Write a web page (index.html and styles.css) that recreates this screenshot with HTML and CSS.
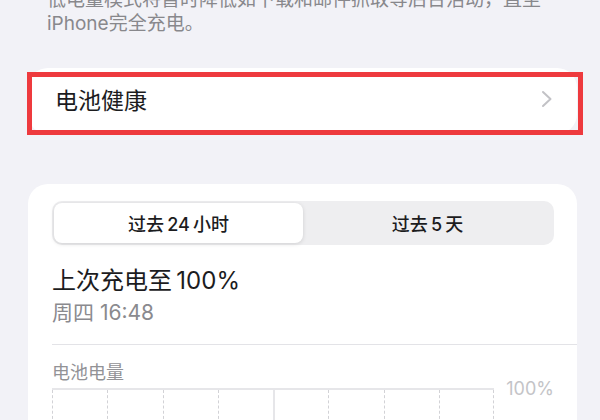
FILE: index.html
```html
<!doctype html>
<html lang="zh-CN">
    <head>
        <meta charset="utf-8">
        <link rel="stylesheet" href="styles.css">
    </head>
    <body>
        <main class="page">
            <p class="footnote">低电量模式将暂时降低如下载和邮件抓取等后台活动，直至<br>iPhone完全充电。</p>

            <section class="card health">
                <span class="health-label">电池健康</span>
                <svg class="chevron" width="12" height="18" viewBox="0 0 12 18">
                    <path d="M2 2 L9.5 9 L2 16" fill="none" stroke="#c2c2c6" stroke-width="2" stroke-linecap="round" stroke-linejoin="round"/>
                </svg>
                <div class="highlight"></div>
            </section>

            <section class="card usage">
                <div class="segmented">
                    <div class="segment active">过去&thinsp;24&thinsp;小时</div>
                    <div class="segment">过去&thinsp;5&thinsp;天</div>
                </div>
                <h2 class="last-charge">上次充电至&thinsp;100%</h2>
                <p class="last-time">周四 16:48</p>
                <hr class="divider">
                <p class="chart-title">电池电量</p>
                <div class="chart">
                    <div class="grid">
                        <span></span><span></span><span></span><span></span>
                        <span class="solid"></span><span></span><span></span><span></span>
                    </div>
                    <span class="axis">100%</span>
                </div>
            </section>
        </main>
    </body>
</html>
```

FILE: styles.css
```css
html, body {
    height: 100%;
}
body {
    background-color: #f2f2f7;
    color: #1c1c1e;
    font-family: Inter, "Noto Sans CJK SC", sans-serif;
    margin: 0;
    overflow: hidden;
}
.page {
    padding: 0 23px 0 28px;
}
.footnote {
    color: #88888c;
    font-size: 19px;
    line-height: 24px;
    margin: -12px 0 0;
    padding-left: 19px;
    white-space: nowrap;
}
.card {
    background: #fff;
    border-radius: 20px;
}

.health {
    align-items: center;
    display: flex;
    height: 66px;
    justify-content: space-between;
    margin-top: 32px;
    padding: 0 24px 0 27px;
    position: relative;
}
.health-label {
    font-size: 23px;
    margin-top: -4px;
}
.chevron {
    margin-top: -4px;
}
.highlight {
    border: 5px solid #ee3a3e;
    bottom: -1px;
    left: -1px;
    position: absolute;
    right: -6px;
    top: 4px;
}

.usage {
    margin-top: 50px;
    padding: 17px 23px 40px 24px;
}
.segmented {
    background: #eeeef0;
    border-radius: 10px;
    box-sizing: border-box;
    display: grid;
    grid-template-columns: 1fr 1fr;
    height: 44px;
    padding: 2px;
}
.segment {
    align-items: center;
    border-radius: 8px;
    display: flex;
    font-size: 18px;
    font-weight: 500;
    justify-content: center;
}
.segment.active {
    background: #fff;
    box-shadow: 0 1px 4px rgba(0, 0, 0, 0.13);
}
.last-charge {
    font-size: 24px;
    font-weight: 400;
    line-height: 30px;
    margin: 21px 0 0;
}
.last-time {
    color: #8a8a8e;
    font-size: 21px;
    line-height: 26px;
    margin: 4px 0 0;
}
.divider {
    border: 0;
    border-top: 1px solid #e3e3e7;
    margin: 18px -23px 0 0;
}
.chart-title {
    color: #929296;
    font-size: 18px;
    line-height: 24px;
    margin: 16px 0 0;
}
.chart {
    display: flex;
    margin-top: 3px;
}
.grid {
    border-top: 2px solid #e6e6e9;
    display: grid;
    grid-template-columns: repeat(8, 1fr);
    height: 60px;
    width: 443px;
}
.grid span {
    border-left: 1px dashed #d2d2d6;
}
.grid span:last-child {
    border-right: 1px dashed #d2d2d6;
}
.grid span.solid {
    border-left: 2px solid #e6e6e9;
}
.axis {
    color: #c4c4c7;
    font-size: 18px;
    line-height: 18px;
    margin: -8px 0 0 12px;
}
```
